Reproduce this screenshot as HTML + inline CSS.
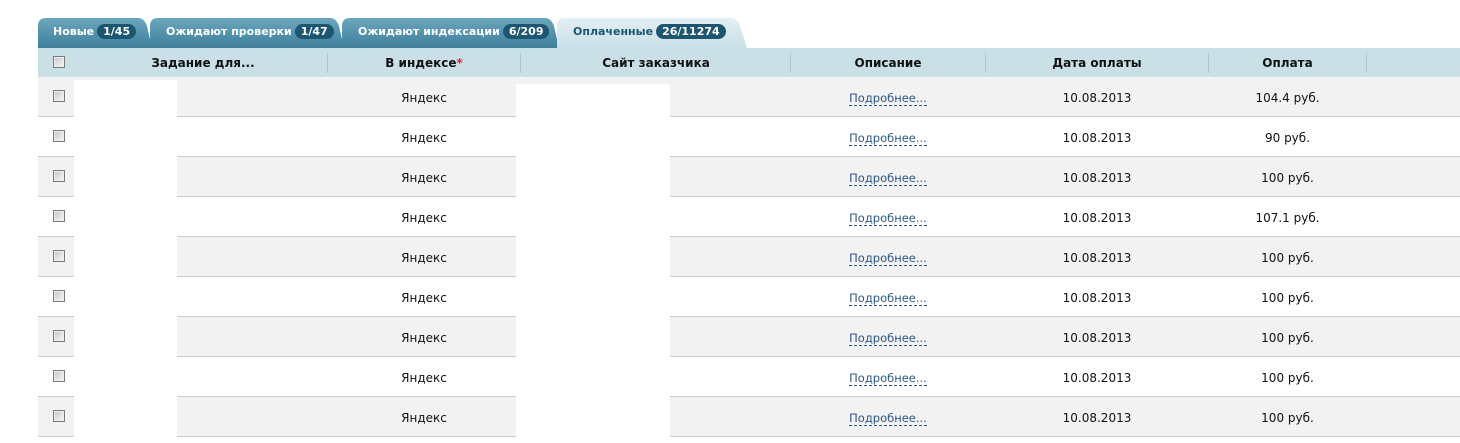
<!DOCTYPE html>
<html><head><meta charset="utf-8"><style>
body{margin:0;width:1460px;height:443px;background:#fff;font-family:Tahoma,"DejaVu Sans","Liberation Sans",sans-serif;position:relative;overflow:hidden}
.tab{position:absolute;top:18px;height:30px;font-size:11px;font-weight:bold;color:#fff;line-height:28px;white-space:nowrap}
.tab svg{position:absolute;left:0;top:0}
.tab span.t{position:relative;padding-left:0}
.b{display:inline-block;background:#1c5670;color:#fff;border-radius:9px;padding:0 6px;line-height:15px;font-size:11px;margin-left:3px}
.hdr{position:absolute;left:38px;top:48px;width:1422px;height:29px;background:#c9e0e7}
.hc{position:absolute;top:0;height:29px;line-height:31px;font-size:12px;font-weight:bold;color:#111;text-align:center}
.dv{position:absolute;top:5px;width:1px;height:20px;background:#a9c6d1}
.row{position:absolute;left:38px;width:1422px;height:39px;border-bottom:1px solid #c9cdcf;font-size:12px;color:#111}
.row div{position:absolute;top:0;line-height:42px;text-align:center}
.cb{position:absolute;width:10px;height:10px;border:1px solid #7a7a7a;background:linear-gradient(135deg,#c4c4c4,#fafafa);box-shadow:inset 0 0 0 1px #eee}
a{color:#2a5a8a;text-decoration:none;border-bottom:1px dashed #2a5a8a;font-size:11.5px}
.w{position:absolute;background:#fff}
</style></head><body>
<div class="tab" style="left:38px;width:114px"><svg width="114" height="30"><path d="M0 30V8Q0 0 8 0H100Q106 0 109 8L114 30Z" fill="url(#g)"/><defs><linearGradient id="g" x1="0" y1="0" x2="0" y2="1"><stop offset="0" stop-color="#6aa7be"/><stop offset="1" stop-color="#3f7f9b"/></linearGradient><linearGradient id="g2" x1="0" y1="0" x2="0" y2="1"><stop offset="0" stop-color="#e2f0f4"/><stop offset="1" stop-color="#c9e0e7"/></linearGradient></defs></svg><span class="t" style="left:15px">Новые<span class="b">1/45</span></span></div>
<div class="tab" style="left:150px;width:194px"><svg width="194" height="30"><path d="M0 30V8Q0 0 8 0H180Q186 0 189 8L194 30Z" fill="url(#g)"/></svg><span class="t" style="left:16px">Ожидают проверки<span class="b">1/47</span></span></div>
<div class="tab" style="left:342px;width:217px"><svg width="217" height="30"><path d="M0 30V8Q0 0 8 0H203Q209 0 212 8L217 30Z" fill="url(#g)"/></svg><span class="t" style="left:16px">Ожидают индексации<span class="b">6/209</span></span></div>
<div class="tab" style="left:557px;width:190px;color:#1c5670"><svg width="190" height="30"><path d="M0 30V8Q0 0 8 0H174Q180 0 183 8L190 30Z" fill="url(#g2)"/></svg><span class="t" style="left:16px">Оплаченные<span class="b">26/11274</span></span></div>
<div class="hdr">
<span class="cb" style="left:15px;top:8px"></span>
<div class="hc" style="left:40px;width:250px">Задание для...</div>
<div class="dv" style="left:289px"></div>
<div class="hc" style="left:290px;width:192px">В индексе<span style="color:#d22">*</span></div>
<div class="dv" style="left:482px"></div>
<div class="hc" style="left:483px;width:270px">Сайт заказчика</div>
<div class="dv" style="left:752px"></div>
<div class="hc" style="left:753px;width:194px">Описание</div>
<div class="dv" style="left:947px"></div>
<div class="hc" style="left:948px;width:222px">Дата оплаты</div>
<div class="dv" style="left:1170px"></div>
<div class="hc" style="left:1171px;width:157px">Оплата</div>
<div class="dv" style="left:1328px"></div>
</div>
<div id="rows"></div>
<script>
var p=["104.4 руб.","90 руб.","100 руб.","107.1 руб.","100 руб.","100 руб.","100 руб.","100 руб.","100 руб."],h="";
for(var i=0;i<9;i++){h+='<div class="row" style="top:'+(77+i*40)+'px;background:'+(i%2?'#fff':'#f2f2f2')+'"><span class="cb" style="left:15px;top:13px"></span><div style="left:290px;width:192px">Яндекс</div><div style="left:753px;width:194px"><a>Подробнее...</a></div><div style="left:948px;width:222px">10.08.2013</div><div style="left:1171px;width:157px">'+p[i]+'</div></div>';}
h+='<div class="w" style="left:74px;top:80px;width:103px;height:363px"></div><div class="w" style="left:516px;top:84px;width:154px;height:359px"></div>';
document.getElementById("rows").innerHTML=h;
</script>
</body></html>
